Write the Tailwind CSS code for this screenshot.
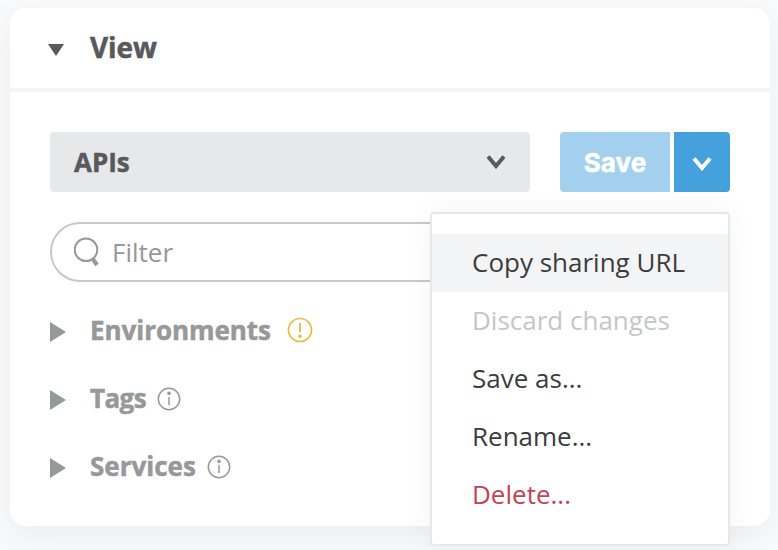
<!DOCTYPE html>
<html lang="en">
<head>
<meta charset="utf-8">
<title>View</title>
<script src="https://cdn.jsdelivr.net/npm/@tailwindcss/browser@4"></script>
</head>
<body class="h-[550px] w-[778px] overflow-hidden bg-[#f9fafc] pt-2 pl-2.5 font-['Open_Sans',sans-serif] text-[26px] leading-[36px]">
<main class="h-[518px] w-[760px] rounded-2xl bg-white shadow-[0_10px_30px_rgba(60,65,70,0.07)]">
  <header class="flex h-[84px] items-center border-b-4 border-[#f4f4f4] pl-[38px]">
    <svg class="mt-[3px] h-3 w-4" viewBox="0 0 16 12" fill="#58595b"><path d="M0 0h16L8 12z"/></svg>
    <h1 class="ml-[26px] pb-[2px] text-[28px] font-bold tracking-[-0.1px] text-[#58595b] [-webkit-text-stroke:0.5px_#58595b]">View</h1>
  </header>
  <div class="px-10 pt-10">
    <div class="flex h-[60px]">
      <button class="flex w-[480px] items-center justify-between rounded bg-[#e7e8ea] pr-6 pl-6 font-bold text-[#58595b]">
        <span class="[-webkit-text-stroke:0.5px_#58595b]">APIs</span>
        <svg class="h-[14px] w-5" viewBox="0 0 20 14" fill="none" stroke="#58595b" stroke-width="4"><path d="M2 1.5 10 11 18 1.5"/></svg>
      </button>
      <div class="relative ml-[30px] flex gap-1">
        <button class="w-[110px] rounded-l bg-[#a3d0ee] pt-[2px] font-['Inter',sans-serif] font-bold text-white [-webkit-text-stroke:0.5px_white]">Save</button>
        <button class="flex w-14 items-center justify-center rounded-r bg-[#45a1db]">
          <svg class="mt-1 h-[14px] w-5" viewBox="0 0 20 14" fill="none" stroke="#fff" stroke-width="4"><path d="M2 1.5 10 11 18 1.5"/></svg>
        </button>
        <div class="absolute top-20 right-0 h-[334px] w-[300px] rounded border-2 border-[#e7e8ea] bg-white pt-5 text-[#3b3c3d] shadow-[0_0_30px_rgba(0,0,0,0.05)]">
          <div class="flex h-[58px] items-center bg-[#f3f4f6] pb-[2px] pl-10">Copy sharing URL</div>
          <div class="flex h-[58px] items-center pb-[2px] pl-10 text-[#c5c6c7]">Discard changes</div>
          <div class="flex h-[58px] items-center pb-[2px] pl-10">Save as...</div>
          <div class="flex h-[58px] items-center pb-[2px] pl-10">Rename...</div>
          <div class="flex h-[58px] items-center pb-[2px] pl-10 text-[#c64153]">Delete...</div>
        </div>
      </div>
    </div>
    <div class="mt-[30px] flex h-[60px] items-center rounded-full border-2 border-[#c7c8ca] pl-[22px] text-[#97989a]">
      <svg class="h-[30px] w-[26px]" viewBox="0 0 26 30" fill="none" stroke="#97989a"><circle cx="12" cy="12.7" r="11.3" stroke-width="2"/><path d="m18.5 21.5 4.5 6.5" stroke-width="4"/></svg>
      <span class="ml-3">Filter</span>
    </div>
    <div class="mt-[14px] font-bold text-[#97989a] [-webkit-text-stroke:0.5px_#97989a]">
      <div class="flex h-[68px] items-center">
        <svg class="mt-1 h-5 w-4" viewBox="0 0 16 20" fill="#97989a"><path d="M0 0 16 10 0 20z"/></svg>
        <span class="ml-6 tracking-[-0.05px]">Environments</span>
        <svg class="ml-4 h-[26px] w-[26px]" viewBox="0 0 26 26" fill="none" stroke="#e8bd48" stroke-width="1.7"><circle cx="13" cy="13" r="11.5"/><path d="M13 6v9" stroke-width="1.9"/><circle cx="13" cy="19.2" r="1.8" fill="#e8bd48" stroke="none"/></svg>
      </div>
      <div class="flex h-[68px] items-center">
        <svg class="mt-1 h-5 w-4" viewBox="0 0 16 20" fill="#97989a"><path d="M0 0 16 10 0 20z"/></svg>
        <span class="ml-6 tracking-[-0.6px]">Tags</span>
        <svg class="mt-px ml-[10px] h-[26px] w-[26px]" viewBox="0 0 26 26" fill="none" stroke="#97989a" stroke-width="1.5"><circle cx="13" cy="13" r="10.7"/><path d="M13 11v8.2"/><circle cx="13" cy="7.4" r="1.8" fill="#97989a" stroke="none"/></svg>
      </div>
      <div class="flex h-[68px] items-center">
        <svg class="mt-1 h-5 w-4" viewBox="0 0 16 20" fill="#97989a"><path d="M0 0 16 10 0 20z"/></svg>
        <span class="ml-6">Services</span>
        <svg class="mt-px ml-[10px] h-[26px] w-[26px]" viewBox="0 0 26 26" fill="none" stroke="#97989a" stroke-width="1.5"><circle cx="13" cy="13" r="10.7"/><path d="M13 11v8.2"/><circle cx="13" cy="7.4" r="1.8" fill="#97989a" stroke="none"/></svg>
      </div>
    </div>
  </div>
</main>
</body>
</html>
